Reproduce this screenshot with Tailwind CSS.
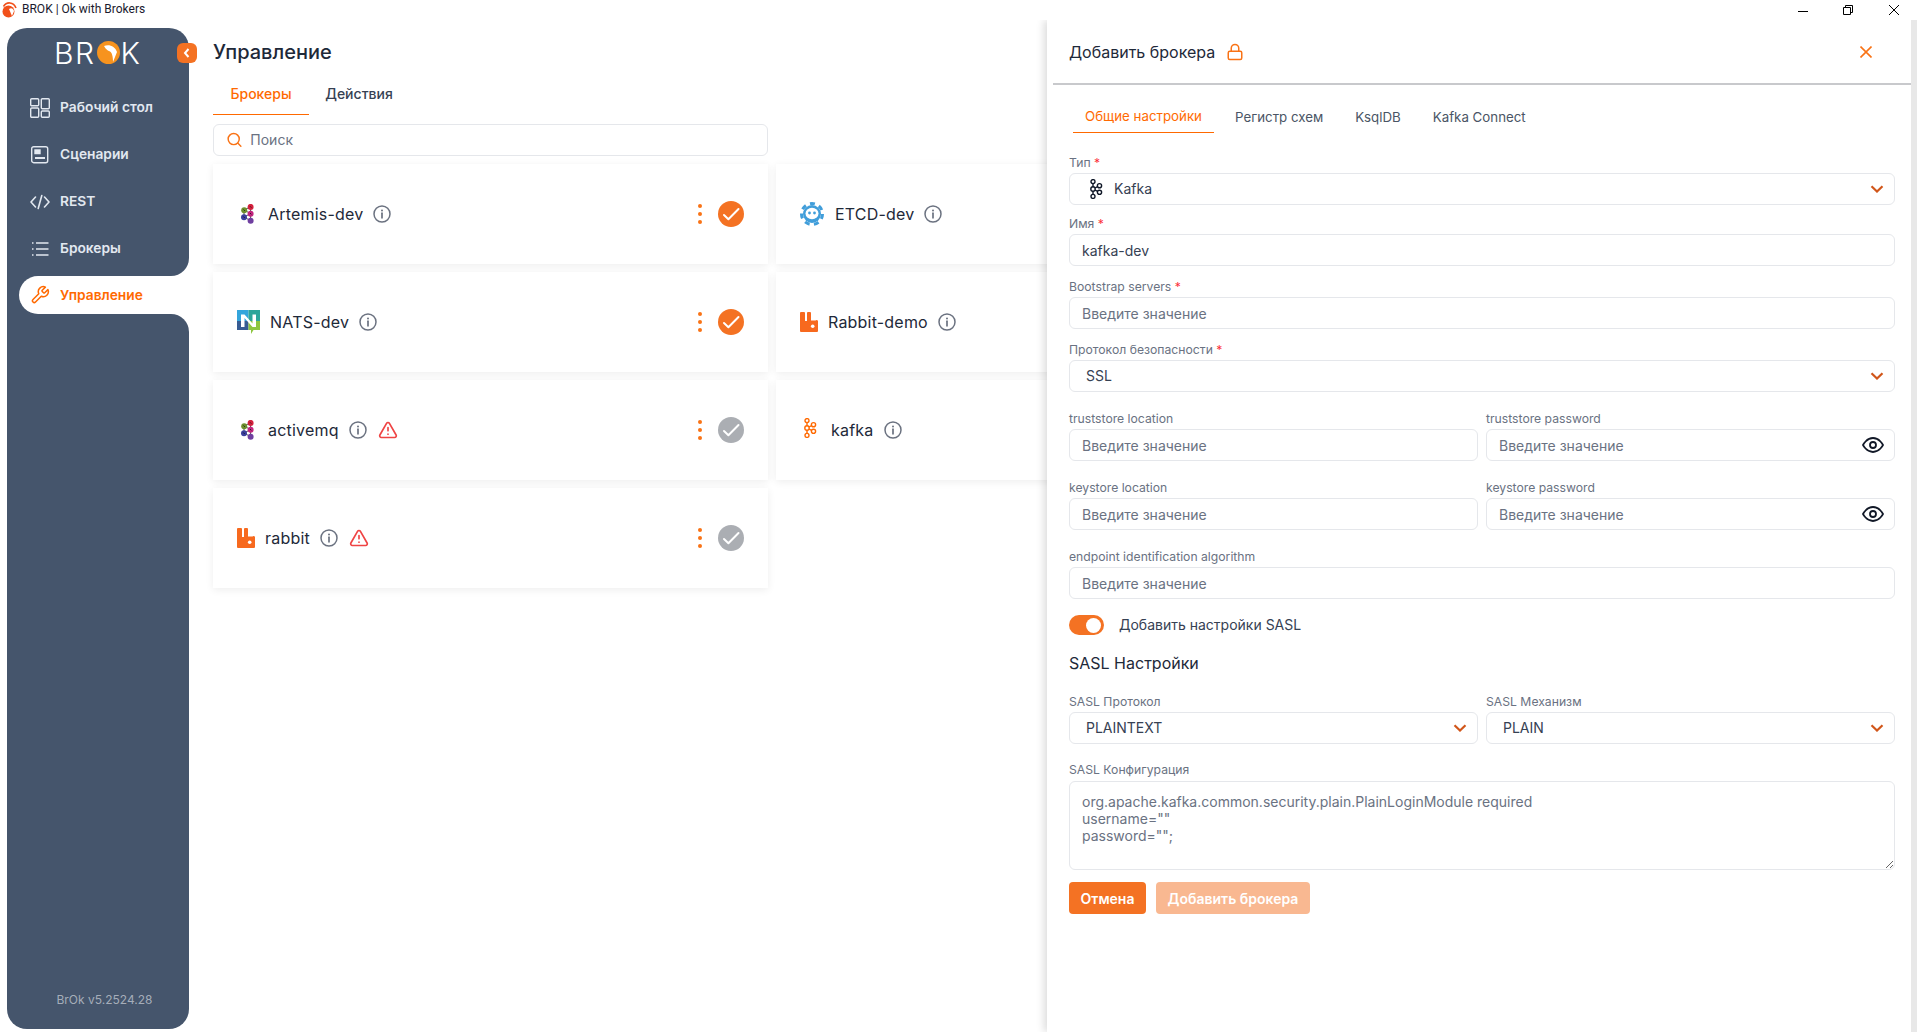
<!DOCTYPE html>
<html lang="ru">

<head>
  <meta charset="utf-8">
  <title>BROK | Ok with Brokers</title>
  <script src="https://cdn.jsdelivr.net/npm/@tailwindcss/browser@4"></script>
</head>

<body class="relative h-[1032px] w-[1917px] overflow-hidden bg-white font-['Inter',sans-serif] text-gray-800">
  <!-- shared icons -->
  <svg class="hidden">
    <symbol id="info" viewBox="0 0 18 18">
      <circle cx="9" cy="9" r="8" fill="none" stroke="#6b7280" stroke-width="1.5" />
      <path d="M9 8.2v4.6" stroke="#6b7280" stroke-width="1.7" stroke-linecap="round" />
      <circle cx="9" cy="5.4" r="1" fill="#6b7280" />
    </symbol>
    <symbol id="warn" viewBox="0 0 24 24">
      <g fill="none" stroke="#ef4444" stroke-width="2" stroke-linecap="round" stroke-linejoin="round">
        <path d="m21.73 18-8-14a2 2 0 0 0-3.48 0l-8 14A2 2 0 0 0 4 21h16a2 2 0 0 0 1.73-3Z" />
        <path d="M12 9v4M12 17h.01" />
      </g>
    </symbol>
    <symbol id="dots" viewBox="0 0 6 20">
      <circle cx="3" cy="2" r="2" fill="#f97316" />
      <circle cx="3" cy="10" r="2" fill="#f97316" />
      <circle cx="3" cy="18" r="2" fill="#f97316" />
    </symbol>
    <symbol id="check" viewBox="0 0 26 26">
      <circle cx="13" cy="13" r="13" fill="currentColor" />
      <path d="M6 14l4.400 4.200L20.500 8" fill="none" stroke="#fff" stroke-width="2" stroke-linecap="round" stroke-linejoin="round" />
    </symbol>
    <symbol id="artemis" viewBox="0 0 17 20">
      <path d="M3 6l6.6-3.2M3 13l6.6-3.4M3 6l6.6 3.6M3 13l6.6 3.7M9.6 3v14M3 6v7" stroke="#222" stroke-width=".8" />
      <circle cx="3.2" cy="6.2" r="3" fill="#6d8f2e" />
      <circle cx="3" cy="13.2" r="3" fill="#3b3f9e" />
      <circle cx="9.6" cy="2.9" r="3" fill="#d4213d" />
      <circle cx="9.6" cy="9.7" r="3" fill="#c2257f" />
      <circle cx="9.6" cy="16.8" r="3" fill="#6f3fa0" />
      <path d="M2.5 5.5l1.4 1.4M2.3 12.5l1.4 1.4M9 2.3l1.3 1.3M9 9l1.3 1.3" stroke="#111" stroke-width=".8" />
    </symbol>
    <symbol id="rabbit" viewBox="0 0 18 20">
      <path fill="#f7691e" d="M1 0h3a1 1 0 0 1 1 1v8h2V1a1 1 0 0 1 1-1h2a1 1 0 0 1 1 1v7.500h4.500A1.500 1.500 0 0 1 18 10v9a1 1 0 0 1-1 1H1a1 1 0 0 1-1-1V1a1 1 0 0 1 1-1z" />
      <circle cx="12.700" cy="14.300" r="1.800" fill="#fff" />
    </symbol>
    <symbol id="kafka" viewBox="0 0 14 20">
      <g fill="none" stroke="currentColor" stroke-width="1.400">
        <circle cx="4" cy="2.600" r="2" />
        <circle cx="4" cy="10" r="2.200" />
        <circle cx="4" cy="17.400" r="2" />
        <circle cx="10.500" cy="6.700" r="2.100" />
        <circle cx="10.500" cy="13.300" r="2.100" />
        <path d="M4 4.600v3.200M4 12.200v3.200M6 9l2.600-1.400M6 11l2.600 1.400" />
      </g>
    </symbol>
    <symbol id="chevron" viewBox="0 0 14 8">
      <path d="M1.500 1.200L7 6.500l5.500-5.300" fill="none" stroke="#d1561a" stroke-width="2.200" />
    </symbol>
    <symbol id="eye" viewBox="0 0 24 24">
      <g fill="none" stroke="#111827" stroke-width="1.800" stroke-linecap="round" stroke-linejoin="round">
        <path d="M2 12s3.500-7 10-7 10 7 10 7-3.500 7-10 7-10-7-10-7Z" />
        <circle cx="12" cy="12" r="3" />
      </g>
    </symbol>
  </svg>

  <!-- Window title bar -->
  <header class="relative z-10 flex h-5 items-center justify-between bg-white">
    <div class="flex items-center">
      <svg class="ml-[2px] h-4 w-[15px]" viewBox="0 0 15 16">
        <circle cx="6.500" cy="9.500" r="6" fill="#f1511b" />
        <path d="M1.500 4.500C4.500-.5 11.500-.5 14 6" fill="none" stroke="#f1511b" stroke-width="1.600" />
        <path d="M7 7c2-1.500 4-1 5 2l-2 5z" fill="#fff" />
      </svg>
      <span class="ml-[5px] -mt-[2px] font-['Roboto',sans-serif] text-xs text-[#1a1a2e]">BROK | Ok with Brokers</span>
    </div>
    <div class="flex items-center">
      <svg class="h-3 w-[10px]" viewBox="0 0 10 12"><path d="M0 7.500h10" stroke="#000" /></svg>
      <svg class="ml-[35px] h-[10px] w-[10px]" viewBox="0 0 10 10" fill="none" stroke="#000"><path d="M.5 2.500h7v7h-7zM2.500 2.500v-2h7v7h-2" /></svg>
      <svg class="ml-[36px] mr-[18px] h-[10px] w-[10px]" viewBox="0 0 10 10"><path d="M0 0l10 10M10 0L0 10" stroke="#000" /></svg>
    </div>
  </header>

  <div class="flex h-[1012px]">
    <!-- Sidebar -->
    <aside class="relative ml-[7px] mt-2 flex h-[1001px] w-[182px] shrink-0 flex-col">
      <div class="h-[248px] rounded-t-[20px] rounded-br-[18px] bg-slate-600">
        <div class="flex h-[49px] items-center pl-[47px] text-[30px] font-light leading-none tracking-[1.500px] text-white">
          <span>BR</span>
          <svg class="mx-[1px] h-[23px] w-[23px]" viewBox="0 0 23 23">
            <circle cx="11.500" cy="11.500" r="11.500" fill="#f7931e" />
            <path d="M7 5c5-2 11 0 13 6l-4 10c0-6-1-10-4-11 0 0-3-1-5-5z" fill="#fff" />
          </svg>
          <span>K</span>
        </div>
        <nav class="mt-[7px] text-[13.750px] font-semibold text-slate-200">
          <a class="flex h-[47px] items-center pl-[23px]">
            <svg class="h-5 w-5" viewBox="0 0 20 20" fill="none" stroke="currentColor" stroke-width="1.400"><rect x=".7" y=".7" width="8" height="7" rx="1" /><rect x=".7" y="10" width="8" height="9.300" rx="1" /><rect x="11.300" y=".7" width="8" height="10" rx="1" /><rect x="11.300" y="13" width="8" height="6.300" rx="1" /></svg>
            <span class="ml-[10px]">Рабочий стол</span>
          </a>
          <a class="flex h-[47px] items-center pl-[23px]">
            <svg class="h-5 w-5" viewBox="0 0 20 20" fill="none" stroke="currentColor" stroke-width="1.400"><rect x="1.700" y="1.700" width="16" height="16" rx="2" /><path d="M5 5h5v3.500H5z" fill="currentColor" /><path d="M5 13h10" stroke-width="2" /></svg>
            <span class="ml-[10px]">Сценарии</span>
          </a>
          <a class="flex h-[47px] items-center pl-[23px]">
            <svg class="h-5 w-5" viewBox="0 0 20 20" fill="none" stroke="currentColor" stroke-width="1.600" stroke-linecap="round" stroke-linejoin="round"><path d="M5.500 5L1 10l4.500 5M14.500 5L19 10l-4.500 5M11.800 3.500L8.200 16.500" /></svg>
            <span class="ml-[10px]">REST</span>
          </a>
          <a class="flex h-[47px] items-center pl-[23px]">
            <svg class="h-5 w-5" viewBox="0 0 20 20" fill="none" stroke="currentColor" stroke-width="1.400"><path d="M6 4h12.500M6 10h12.500M6 16h12.500" /><path d="M2 4h1.500M2 10h1.500M2 16h1.500" stroke-width="1.600" /></svg>
            <span class="ml-[10px]">Брокеры</span>
          </a>
        </nav>
      </div>
      <div class="h-[38px] bg-slate-600 pl-3">
        <a class="flex h-full items-center rounded-l-[19px] bg-white pl-[11px] text-[13.750px] font-semibold text-orange-500">
          <svg class="h-5 w-5" viewBox="0 0 24 24" fill="none" stroke="currentColor" stroke-width="1.800" stroke-linecap="round" stroke-linejoin="round"><path d="M14.700 6.300a1 1 0 0 0 0 1.400l1.600 1.600a1 1 0 0 0 1.400 0l3.770-3.770a6 6 0 0 1-7.940 7.940l-6.910 6.910a2.120 2.120 0 0 1-3-3l6.910-6.910a6 6 0 0 1 7.940-7.940l-3.760 3.760z" /></svg>
          <span class="ml-[10px]">Управление</span>
        </a>
      </div>
      <div class="relative flex-1 rounded-b-[20px] rounded-tr-[18px] bg-slate-600">
        <p class="absolute bottom-[21px] left-0 w-full pl-[13px] text-center text-xs text-gray-300/70">BrOk v5.2524.28</p>
      </div>
      <!-- collapse button -->
      <button class="absolute left-[170px] top-[15px] flex h-5 w-5 items-center justify-center rounded-md bg-[#f47223]">
        <svg class="h-3 w-3" viewBox="0 0 12 12" fill="none" stroke="#fff" stroke-width="2"><path d="M7.500 2L4 6l3.500 4" /></svg>
      </button>
    </aside>

    <!-- Main -->
    <main class="ml-6 flex-1">
      <h1 class="mt-[19px] text-xl font-medium leading-[26px]">Управление</h1>
      <div class="mt-[13px] flex text-sm">
        <button class="h-[37px] w-[96px] border-b border-orange-500 pb-[5px] font-medium text-orange-500">Брокеры</button>
        <button class="h-[37px] w-[100px] pb-[5px] font-medium text-gray-700">Действия</button>
      </div>
      <label class="mt-[9px] flex h-8 w-[555px] items-center rounded-md border border-gray-200 pl-[13px]">
        <svg class="h-4 w-4" viewBox="0 0 16 16" fill="none" stroke="#f97316" stroke-width="1.500" stroke-linecap="round"><circle cx="7" cy="7" r="5.800" /><path d="M11.500 11.500l3 3" /></svg>
        <input class="ml-[8px] w-full bg-transparent text-sm outline-none placeholder:text-gray-500" placeholder="Поиск">
      </label>

      <div class="mt-2 grid w-[1118px] grid-cols-[555px_555px] gap-2">
        <!-- Artemis-dev -->
        <div class="flex h-[100px] items-center bg-white pl-[28px] pr-6 shadow-[0_2px_8px_rgba(0,0,0,0.07)]">
          <svg class="h-5 w-[17px]"><use href="#artemis" /></svg>
          <span class="ml-[10px] tracking-[0.2px]">Artemis-dev</span>
          <svg class="ml-[10px] h-[18px] w-[18px]"><use href="#info" /></svg>
          <svg class="ml-auto h-[20px] w-[6px]"><use href="#dots" /></svg>
          <svg class="ml-[15px] h-[26px] w-[26px] text-[#f47223]"><use href="#check" /></svg>
        </div>
        <!-- ETCD-dev -->
        <div class="flex h-[100px] items-center bg-white pl-6 pr-6 shadow-[0_2px_8px_rgba(0,0,0,0.07)]">
          <svg class="h-6 w-6" viewBox="0 0 24 24">
            <circle cx="12" cy="12" r="10.500" fill="none" stroke="#419eda" stroke-width="3" stroke-dasharray="5 4.420" />
            <circle cx="12" cy="12" r="9" fill="#419eda" />
            <ellipse cx="12" cy="11.500" rx="6.500" ry="5.800" fill="#fff" />
            <circle cx="9.500" cy="11" r="1.400" fill="#419eda" />
            <circle cx="14.500" cy="11" r="1.400" fill="#419eda" />
          </svg>
          <span class="ml-[11px] tracking-[0.2px]">ETCD-dev</span>
          <svg class="ml-[10px] h-[18px] w-[18px]"><use href="#info" /></svg>
        </div>
        <!-- NATS-dev -->
        <div class="flex h-[100px] items-center bg-white pl-6 pr-6 shadow-[0_2px_8px_rgba(0,0,0,0.07)]">
          <svg class="h-6 w-[23px]" viewBox="0 0 23 24">
            <path d="M0 0h11.500v11H0z" fill="#34a5dc" />
            <path d="M11.500 0H23v11H11.500z" fill="#2ea59a" />
            <path d="M0 11h11.500v9H0z" fill="#375c93" />
            <path d="M11.500 11H23v9h-6.500l-2.500 4v-4h-2.500z" fill="#8dc63f" />
            <path d="M4 4.500h3.500l8 9V4.500H19V17h-3.500l-8-9v9H4z" fill="#fff" />
          </svg>
          <span class="ml-[10px] tracking-[0.2px]">NATS-dev</span>
          <svg class="ml-[10px] h-[18px] w-[18px]"><use href="#info" /></svg>
          <svg class="ml-auto h-[20px] w-[6px]"><use href="#dots" /></svg>
          <svg class="ml-[15px] h-[26px] w-[26px] text-[#f47223]"><use href="#check" /></svg>
        </div>
        <!-- Rabbit-demo -->
        <div class="flex h-[100px] items-center bg-white pl-6 pr-6 shadow-[0_2px_8px_rgba(0,0,0,0.07)]">
          <svg class="h-5 w-[18px]"><use href="#rabbit" /></svg>
          <span class="ml-[10px] tracking-[0.2px]">Rabbit-demo</span>
          <svg class="ml-[10px] h-[18px] w-[18px]"><use href="#info" /></svg>
        </div>
        <!-- activemq -->
        <div class="flex h-[100px] items-center bg-white pl-[28px] pr-6 shadow-[0_2px_8px_rgba(0,0,0,0.07)]">
          <svg class="h-5 w-[17px]"><use href="#artemis" /></svg>
          <span class="ml-[10px] tracking-[0.2px]">activemq</span>
          <svg class="ml-[10px] h-[18px] w-[18px]"><use href="#info" /></svg>
          <svg class="ml-[11px] h-5 w-5"><use href="#warn" /></svg>
          <svg class="ml-auto h-[20px] w-[6px]"><use href="#dots" /></svg>
          <svg class="ml-[15px] h-[26px] w-[26px] text-[#abaeb3]"><use href="#check" /></svg>
        </div>
        <!-- kafka -->
        <div class="flex h-[100px] items-center bg-white pl-[27px] pr-6 shadow-[0_2px_8px_rgba(0,0,0,0.07)]">
          <svg class="-mt-1 h-5 w-[14px] text-orange-500"><use href="#kafka" /></svg>
          <span class="ml-[14px] tracking-[0.2px]">kafka</span>
          <svg class="ml-[11px] h-[18px] w-[18px]"><use href="#info" /></svg>
        </div>
        <!-- rabbit -->
        <div class="flex h-[100px] items-center bg-white pl-6 pr-6 shadow-[0_2px_8px_rgba(0,0,0,0.07)]">
          <svg class="h-5 w-[18px]"><use href="#rabbit" /></svg>
          <span class="ml-[10px] tracking-[0.2px]">rabbit</span>
          <svg class="ml-[10px] h-[18px] w-[18px]"><use href="#info" /></svg>
          <svg class="ml-[11px] h-5 w-5"><use href="#warn" /></svg>
          <svg class="ml-auto h-[20px] w-[6px]"><use href="#dots" /></svg>
          <svg class="ml-[15px] h-[26px] w-[26px] text-[#abaeb3]"><use href="#check" /></svg>
        </div>
      </div>
    </main>
  </div>

  <!-- Add broker drawer, lies over the list -->
  <section class="absolute bottom-0 left-[1047px] right-0 top-5 flex bg-white shadow-[-3px_0_8px_rgba(0,0,0,0.14)]">
    <div class="flex-1">
      <div class="ml-[6px] flex h-[65px] items-center border-b-2 border-[#c8c9cc] pl-4 pr-[39px]">
        <h2 class="text-base">Добавить брокера</h2>
        <svg class="ml-[11px] h-[18px] w-[18px]" viewBox="0 0 24 24" fill="none" stroke="#f97316" stroke-width="2" stroke-linecap="round" stroke-linejoin="round"><rect x="3" y="11" width="18" height="11" rx="2" /><path d="M7 11V7a5 5 0 0 1 10 0v4" /></svg>
        <svg class="ml-auto h-3 w-3" viewBox="0 0 12 12"><path d="M.5.5l11 11M11.500.5l-11 11" stroke="#f97316" stroke-width="1.600" /></svg>
      </div>

      <form class="px-[22px] pr-4">
        <div class="-ml-[1px] mt-[14px] flex text-[13.300px]">
          <span class="ml-[5px] flex h-[34px] w-[141px] items-center justify-center border-b border-orange-500 pt-[3px] text-orange-500">Общие настройки</span>
          <span class="flex h-[34px] items-center pl-[21px] pt-[3px] text-gray-600">Регистр схем</span>
          <span class="flex h-[34px] items-center pl-[32px] pt-[3px] text-gray-600">KsqlDB</span>
          <span class="flex h-[34px] items-center pl-[32px] pt-[3px] text-gray-600">Kafka Connect</span>
        </div>

        <label class="mb-[3px] mt-[21px] block h-4 text-[12.200px] leading-[18px] text-gray-500">Тип <span class="text-red-500">*</span></label>
        <div class="flex h-8 items-center rounded-md border border-gray-200 pl-[19px] pr-[10px] text-sm text-gray-700">
          <svg class="h-5 w-[14px] text-gray-900"><use href="#kafka" /></svg>
          <span class="ml-[11px]">Kafka</span>
          <svg class="ml-auto h-2 w-[14px]"><use href="#chevron" /></svg>
        </div>

        <label class="mb-[2px] mt-[11px] block h-4 text-[12.200px] leading-4 text-gray-500">Имя <span class="text-red-500">*</span></label>
        <input class="block h-8 w-full rounded-md border border-gray-200 px-3 text-sm text-gray-700 outline-none" value="kafka-dev">

        <label class="mb-[3px] mt-3 block h-4 text-[12.200px] leading-[18px] text-gray-500">Bootstrap servers <span class="text-red-500">*</span></label>
        <input class="block h-8 w-full rounded-md border border-gray-200 px-3 text-sm outline-none placeholder:text-gray-500" placeholder="Введите значение">

        <label class="mb-[3px] mt-3 block h-4 text-[12.200px] leading-[18px] text-gray-500">Протокол безопасности <span class="text-red-500">*</span></label>
        <div class="flex h-8 items-center rounded-md border border-gray-200 pl-4 pr-[10px] text-sm text-gray-700">
          <span>SSL</span>
          <svg class="ml-auto h-2 w-[14px]"><use href="#chevron" /></svg>
        </div>

        <div class="mt-[18px] grid grid-cols-2 gap-x-2 gap-y-[18px]">
          <div>
            <label class="mb-[3px] block h-4 text-[12.200px] leading-[18px] text-gray-500">truststore location</label>
            <input class="block h-8 w-full rounded-md border border-gray-200 px-3 text-sm outline-none placeholder:text-gray-500" placeholder="Введите значение">
          </div>
          <div>
            <label class="mb-[3px] block h-4 text-[12.200px] leading-[18px] text-gray-500">truststore password</label>
            <div class="flex h-8 items-center rounded-md border border-gray-200 pl-3 pr-[9px]">
              <input class="w-full pt-[1px] text-sm outline-none placeholder:text-gray-500" placeholder="Введите значение">
              <svg class="h-6 w-6 shrink-0"><use href="#eye" /></svg>
            </div>
          </div>
          <div>
            <label class="mb-[3px] block h-4 text-[12.200px] leading-[18px] text-gray-500">keystore location</label>
            <input class="block h-8 w-full rounded-md border border-gray-200 px-3 text-sm outline-none placeholder:text-gray-500" placeholder="Введите значение">
          </div>
          <div>
            <label class="mb-[3px] block h-4 text-[12.200px] leading-[18px] text-gray-500">keystore password</label>
            <div class="flex h-8 items-center rounded-md border border-gray-200 pl-3 pr-[9px]">
              <input class="w-full pt-[1px] text-sm outline-none placeholder:text-gray-500" placeholder="Введите значение">
              <svg class="h-6 w-6 shrink-0"><use href="#eye" /></svg>
            </div>
          </div>
        </div>

        <label class="mb-[3px] mt-[18px] block h-4 text-[12.200px] leading-[18px] text-gray-500">endpoint identification algorithm</label>
        <input class="block h-8 w-full rounded-md border border-gray-200 px-3 text-sm outline-none placeholder:text-gray-500" placeholder="Введите значение">

        <div class="mt-4 flex h-5 items-center">
          <span class="flex h-5 w-[35px] items-center justify-end rounded-full bg-[#f47223] pr-[3px]"><span class="h-[15px] w-[15px] rounded-full bg-white"></span></span>
          <span class="ml-[15px] text-sm text-gray-700">Добавить настройки SASL</span>
        </div>

        <h3 class="mt-[17px] h-[22px] text-base leading-[22px] text-gray-800">SASL Настройки</h3>

        <div class="mt-[19px] grid grid-cols-2 gap-x-2">
          <div>
            <label class="mb-[3px] block h-4 text-[12.200px] leading-[18px] text-gray-500">SASL Протокол</label>
            <div class="flex h-8 items-center rounded-md border border-gray-200 pl-4 pr-[10px] text-sm text-gray-700">
              <span>PLAINTEXT</span>
              <svg class="ml-auto h-2 w-[14px]"><use href="#chevron" /></svg>
            </div>
          </div>
          <div>
            <label class="mb-[3px] block h-4 text-[12.200px] leading-[18px] text-gray-500">SASL Механизм</label>
            <div class="flex h-8 items-center rounded-md border border-gray-200 pl-4 pr-[10px] text-sm text-gray-700">
              <span>PLAIN</span>
              <svg class="ml-auto h-2 w-[14px]"><use href="#chevron" /></svg>
            </div>
          </div>
        </div>

        <label class="mb-[3px] mt-[18px] block h-4 text-[12.200px] leading-4 text-gray-500">SASL Конфигурация</label>
        <textarea class="block h-[89px] w-full rounded-md border border-gray-200 px-3 pt-[11px] text-sm leading-[17px] outline-none placeholder:text-gray-500" placeholder="org.apache.kafka.common.security.plain.PlainLoginModule required&#10;username=&quot;&quot;&#10;password=&quot;&quot;;"></textarea>

        <div class="mt-3 flex gap-[10px]">
          <button type="button" class="h-8 w-[77px] rounded bg-[#f47223] pt-[1px] text-sm font-semibold text-white">Отмена</button>
          <button type="button" class="h-8 w-[154px] rounded bg-[#f47223]/50 pt-[1px] text-sm font-semibold text-white">Добавить брокера</button>
        </div>
      </form>
    </div>
    <div class="w-1.5 bg-[#e8e8e8]"></div>
  </section>
</body>

</html>
